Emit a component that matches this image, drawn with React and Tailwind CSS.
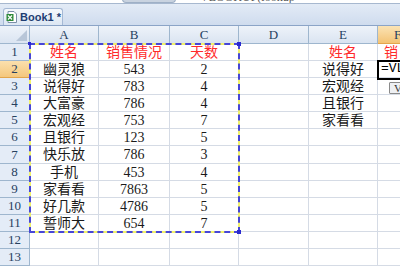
import React from 'react';

const cols = [
  { key: 'A', w: 69 },
  { key: 'B', w: 71 },
  { key: 'C', w: 69 },
  { key: 'D', w: 70 },
  { key: 'E', w: 69 },
  { key: 'F', w: 40 },
];

const rowHeights = [17, 17, 17, 17, 17, 17, 18, 17, 17, 17, 17, 17, 17, 17];

const data = [
  ['姓名', '销售情况', '天数', '', '姓名', '销'],
  ['幽灵狼', '543', '2', '', '说得好', ''],
  ['说得好', '783', '4', '', '宏观经', ''],
  ['大富豪', '786', '4', '', '且银行', ''],
  ['宏观经', '753', '7', '', '家看看', ''],
  ['且银行', '123', '5', '', '', ''],
  ['快乐放', '786', '3', '', '', ''],
  ['手机', '453', '4', '', '', ''],
  ['家看看', '7863', '5', '', '', ''],
  ['好几款', '4786', '5', '', '', ''],
  ['誓师大', '654', '7', '', '', ''],
  ['', '', '', '', '', ''],
  ['', '', '', '', '', ''],
  ['', '', '', '', '', ''],
];

const cellFont = { fontFamily: "'Liberation Serif', 'Noto Sans CJK SC', serif" };

function ExcelIcon() {
  return (
    <svg width="11" height="12" viewBox="0 0 11 12" className="shrink-0">
      <path d="M2 0.5h6l2.5 2.5v8.5h-8.5z" fill="#fff" stroke="#7a8fa8" />
      <rect x="0.5" y="3" width="7" height="7" fill="#2f8a3a" />
      <path d="M2 4.5l4 4M6 4.5l-4 4" stroke="#fff" strokeWidth="1.2" />
    </svg>
  );
}

export default function App() {
  return (
    <div className="relative w-[400px] h-[266px] overflow-hidden bg-white" style={cellFont}>
      {/* formula bar remnant */}
      <div className="h-[4px] flex items-end border-b border-[#a7b8cf] bg-white overflow-hidden">
        <div className="ml-[122px] w-[54px] h-[4px] rounded-b-md bg-[#c9d3e0] border border-t-0 border-[#9fb0c6]" />
        <div className="ml-[24px] h-[4px] overflow-hidden">
          <div className="-mt-[8px] text-[12px] leading-[12px] text-[#555] whitespace-nowrap">VLOOKUP(lookup</div>
        </div>
      </div>

      {/* workbook tab strip */}
      <div className="h-[22px] flex items-end pl-[3px] bg-gradient-to-b from-[#e3ebf6] to-[#cfdcee] border-b border-[#8ba4c7]">
        <div className="h-[17px] w-[60px] flex items-center gap-[3px] px-[2px] rounded-t-[3px] border border-b-0 border-[#a5b9d5] bg-gradient-to-b from-[#f5f8fc] to-[#dde7f3]">
          <ExcelIcon />
          <span className="text-[11px] font-bold text-[#1e3e73] font-['Liberation_Sans'] leading-none whitespace-nowrap">Book1 *</span>
        </div>
      </div>

      {/* column headers */}
      <div className="flex h-[18px]">
        <div className="relative w-[30px] shrink-0 border-r border-b border-[#9eb6ce] bg-gradient-to-b from-[#eef3fa] to-[#dae4f1]">
          <div className="absolute right-[2px] bottom-[2px] w-0 h-0 border-l-[11px] border-l-transparent border-b-[11px] border-b-[#b8c6d8]" />
        </div>
        {cols.map((c) => (
          <div
            key={c.key}
            style={{ width: c.w }}
            className={
              'shrink-0 flex items-center justify-center text-[13px] text-[#27415f] border-r border-b ' +
              (c.key === 'F'
                ? 'bg-gradient-to-b from-[#fbe3b4] to-[#f3c374] border-[#e2a54c]'
                : 'bg-gradient-to-b from-[#eef3fa] to-[#dae4f1] border-[#9eb6ce]')
            }
          >
            {c.key}
          </div>
        ))}
      </div>

      {/* rows */}
      {data.map((row, r) => (
        <div key={r} className="flex" style={{ height: rowHeights[r] }}>
          <div
            className={
              'w-[30px] shrink-0 flex items-center justify-center text-[13px] text-[#27415f] border-r border-b ' +
              (r === 1
                ? 'bg-gradient-to-b from-[#fbe0ad] to-[#f4c77c] border-[#e2a54c]'
                : 'bg-[#e4ecf7] border-[#9eb6ce]')
            }
          >
            {r + 1}
          </div>
          {cols.map((c, ci) => (
            <div
              key={c.key}
              style={{ width: c.w }}
              className={
                'shrink-0 flex items-center whitespace-nowrap overflow-hidden text-[14px] border-r border-b border-[#d5dbe5] ' +
                (r === 0 ? 'text-[#ff2a2a] ' : 'text-[#1a1a1a] ') +
                (ci === 5 ? 'justify-start pl-[6px]' : 'justify-center')
              }
            >
              {ci === 5 && r === 1 ? (
                <span className="-ml-[3px] text-black text-[13px] font-['Liberation_Mono']">=VL</span>
              ) : (
                row[ci]
              )}
            </div>
          ))}
        </div>
      ))}

      {/* copy selection marching ants */}
      <div className="absolute left-[29px] top-[43px] w-[211px] h-[190px] border-2 border-[#f2f26a]" />
      <div className="absolute left-[29px] top-[43px] w-[211px] h-[190px] border-2 border-dashed border-[#4646d6]" />
      <div className="absolute left-[237px] top-[42px] w-[4px] h-[4px] bg-[#2b2bd0]" />
      <div className="absolute left-[237px] top-[230px] w-[4px] h-[4px] bg-[#2b2bd0]" />
      <div className="absolute left-[28px] top-[42px] w-[3px] h-[3px] bg-[#2b2bd0]" />

      {/* active cell F2 border */}
      <div className="absolute left-[377px] top-[60px] w-[40px] h-[20px] border-2 border-black pointer-events-none" />

      {/* function tooltip */}
      <div className="absolute left-[389px] top-[82px] w-[40px] h-[12px] border border-[#8a8a8a] bg-[#eef0f3] rounded-[1px] overflow-hidden text-[11px] leading-[10px] pl-[4px] text-[#333] whitespace-nowrap">
        VLOOKUP
      </div>
    </div>
  );
}
